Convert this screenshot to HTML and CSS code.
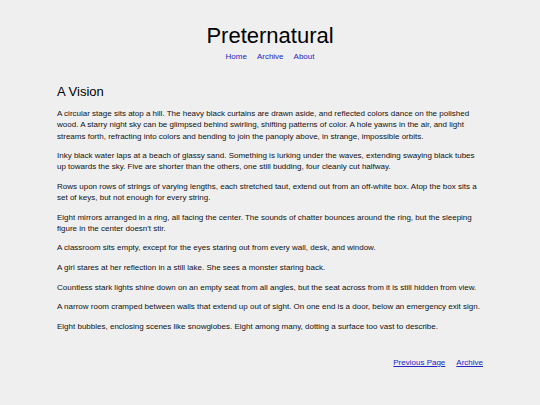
FILE: index.html
```html
<!DOCTYPE html>
<html lang="en">
<head>
<meta charset="utf-8">
<title>Preternatural</title>
<link rel="stylesheet" href="styles.css">
</head>
<body>
<div class="page">
  <header class="site-header">
    <h1 class="site-title">Preternatural</h1>
    <nav class="site-nav">
      <a href="#">Home</a>
      <a href="#">Archive</a>
      <a href="#">About</a>
    </nav>
  </header>
  <main class="post">
    <h2 class="post-title">A Vision</h2>
    <p>A circular stage sits atop a hill. The heavy black curtains are drawn aside, and reflected colors dance on the polished wood. A starry night sky can be glimpsed behind swirling, shifting patterns of color. A hole yawns in the air, and light streams forth, refracting into colors and bending to join the panoply above, in strange, impossible orbits.</p>
    <p>Inky black water laps at a beach of glassy sand. Something is lurking under the waves, extending swaying black tubes up towards the sky. Five are shorter than the others, one still budding, four cleanly cut halfway.</p>
    <p>Rows upon rows of strings of varying lengths, each stretched taut, extend out from an off-white box. Atop the box sits a set of keys, but not enough for every string.</p>
    <p>Eight mirrors arranged in a ring, all facing the center. The sounds of chatter bounces around the ring, but the sleeping figure in the center doesn't stir.</p>
    <p>A classroom sits empty, except for the eyes staring out from every wall, desk, and window.</p>
    <p>A girl stares at her reflection in a still lake. She sees a monster staring back.</p>
    <p>Countless stark lights shine down on an empty seat from all angles, but the seat across from it is still hidden from view.</p>
    <p>A narrow room cramped between walls that extend up out of sight. On one end is a door, below an emergency exit sign.</p>
    <p>Eight bubbles, enclosing scenes like snowglobes. Eight among many, dotting a surface too vast to describe.</p>
  </main>
  <footer class="post-nav">
    <a href="#">Previous Page</a>
    <a href="#">Archive</a>
  </footer>
</div>
</body>
</html>
```
FILE: styles.css
```css
html, body {
  margin: 0;
  padding: 0;
  background: #efefef;
}
body {
  font-family: "Liberation Sans", Arial, sans-serif;
  color: #111;
  font-size: 8px;
  line-height: 1.4;
}
.page {
  width: 426px;
  margin: 0 auto;
  padding-top: 23px;
}
.site-header {
  text-align: center;
}
.site-title {
  font-weight: normal;
  font-size: 22px;
  line-height: 26px;
  margin: 0;
  color: #000;
}
.site-nav {
  display: flex;
  justify-content: center;
  gap: 10px;
  margin-top: 2px;
}
a {
  color: #2323c8;
}
.site-nav a {
  text-decoration: none;
}
.post {
  margin-top: 22px;
}
.post-title {
  font-weight: normal;
  font-size: 13px;
  line-height: 16px;
  margin: 0 0 8px;
  color: #000;
}
.post p {
  margin: 0 0 8.4px;
}
.post-nav {
  display: flex;
  justify-content: flex-end;
  gap: 11px;
  margin-top: 25px;
}
```
